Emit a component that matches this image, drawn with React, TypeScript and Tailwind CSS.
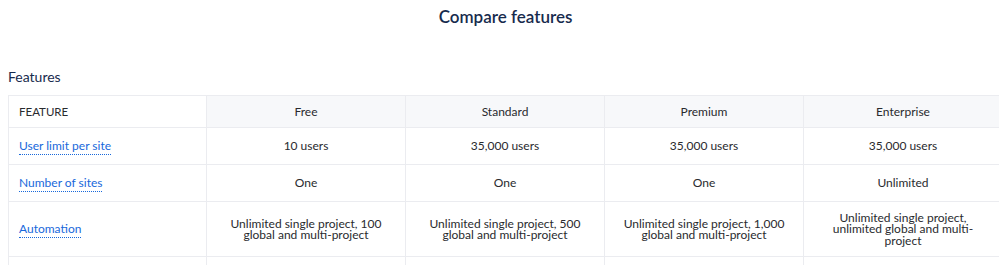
const plans = ["Free", "Standard", "Premium", "Enterprise"];

const rows = [
  { name: "User limit per site", h: "h-[37px]", values: ["10 users", "35,000 users", "35,000 users", "35,000 users"] },
  { name: "Number of sites", h: "h-[37px]", values: ["One", "One", "One", "Unlimited"] },
  {
    name: "Automation",
    h: "h-[55px]",
    values: [
      "Unlimited single project, 100 global and multi-project",
      "Unlimited single project, 500 global and multi-project",
      "Unlimited single project, 1,000 global and multi-project",
      "Unlimited single project, unlimited global and multi-project",
    ],
  },
  { name: "", h: "h-[37px]", values: ["", "", "", ""] },
];

export default function App() {
  return (
    <div className="h-[265px] w-[999px] overflow-hidden bg-white font-['Lato',sans-serif] text-[#172b4d]">
      <div className="w-[995px] ml-2">
        <h2 className="pt-[6px] text-center text-[17px] font-semibold leading-[22px]">Compare features</h2>
        <h3 className="mt-[40px] text-[14px] leading-[18px]">Features</h3>
        <table className="mt-[9px] w-[995px] table-fixed border-collapse text-[12px] text-[#292a2e]">
          <thead>
            <tr className="h-[32px]">
              <th className="w-[198px] border border-[#ebecf0] pl-[10px] text-left text-[11.5px] font-normal">FEATURE</th>
              {plans.map((p) => (
                <th key={p} className="w-[199px] border border-[#ebecf0] bg-[#f7f8fa] text-center font-normal">
                  {p}
                </th>
              ))}
            </tr>
          </thead>
          <tbody>
            {rows.map((r, i) => (
              <tr key={i} className={r.h}>
                <td className="border border-[#ebecf0] pl-[10px]">
                  {r.name && (
                    <span className="border-b border-dotted border-[#1868db] pb-[1px] text-[#1868db]">{r.name}</span>
                  )}
                </td>
                {r.values.map((v, j) => (
                  <td key={j} className="border border-[#ebecf0] px-[14px] text-center leading-[11.5px]">
                    {v}
                  </td>
                ))}
              </tr>
            ))}
          </tbody>
        </table>
      </div>
    </div>
  );
}
